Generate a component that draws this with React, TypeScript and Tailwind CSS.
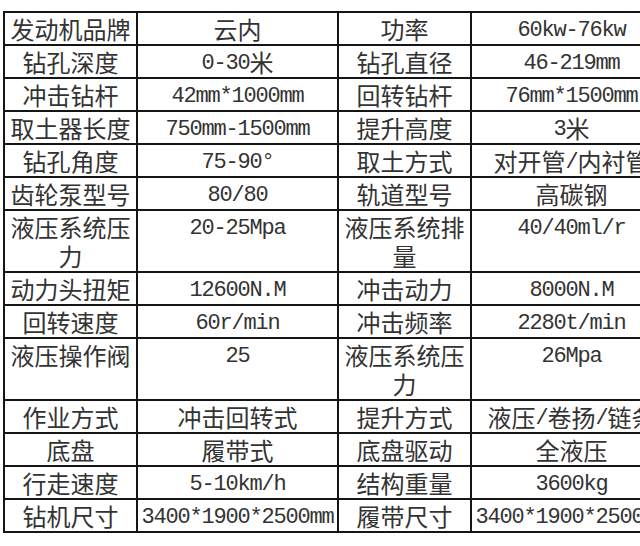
const rows: [string, string, string, string][] = [
  ['发动机品牌', '云内', '功率', '60kw-76kw'],
  ['钻孔深度', '0-30米', '钻孔直径', '46-219mm'],
  ['冲击钻杆', '42mm*1000mm', '回转钻杆', '76mm*1500mm'],
  ['取土器长度', '750mm-1500mm', '提升高度', '3米'],
  ['钻孔角度', '75-90°', '取土方式', '对开管/内衬管'],
  ['齿轮泵型号', '80/80', '轨道型号', '高碳钢'],
  ['液压系统压力', '20-25Mpa', '液压系统排量', '40/40ml/r'],
  ['动力头扭矩', '12600N.M', '冲击动力', '8000N.M'],
  ['回转速度', '60r/min', '冲击频率', '2280t/min'],
  ['液压操作阀', '25', '液压系统压力', '26Mpa'],
  ['作业方式', '冲击回转式', '提升方式', '液压/卷扬/链条'],
  ['底盘', '履带式', '底盘驱动', '全液压'],
  ['行走速度', '5-10km/h', '结构重量', '3600kg'],
  ['钻机尺寸', '3400*1900*2500mm', '履带尺寸', '3400*1900*2500mm'],
];

// CJK runs in the CJK face, latin runs in a half-width mono so widths line up like the original.
// each run is a fixed-height inline-block so mixed fonts don't stretch the row
function Txt({ s }: { s: string }) {
  const parts = s.match(/[\u3000-\u9fff\uff00-\uffef]+|[^\u3000-\u9fff\uff00-\uffef]+/g) || [];
  return (
    <>
      {parts.map((p, i) =>
        /[\u3000-\u9fff\uff00-\uffef]/.test(p) ? (
          <span key={i} className="inline-block align-top h-[29px] font-['Noto_Sans_CJK_SC',sans-serif] text-[24px] leading-[29px]">
            {p}
          </span>
        ) : (
          <span key={i} className="inline-block align-top h-[29px] pt-[2px] font-['Liberation_Mono','Noto_Sans_CJK_SC',monospace] text-[22px] leading-[29px] tracking-[-1.2px]">
            {p}
          </span>
        )
      )}
    </>
  );
}

// labels wrap char by char like the original cells
function Label({ s }: { s: string }) {
  return (
    <div className="flex flex-wrap justify-center">
      {Array.from(s).map((ch, i) => (
        <span key={i} className="block h-[29px] w-[24px] font-['Noto_Sans_CJK_SC',sans-serif] text-[24px] leading-[29px]">
          {ch}
        </span>
      ))}
    </div>
  );
}

export default function App() {
  return (
    <div className="w-[640px] h-[546px] overflow-hidden bg-white">
      <table className="ml-[3px] mt-[11px] w-[668px] table-fixed border-collapse text-[#333]">
        <colgroup>
          <col className="w-[133px]" />
          <col className="w-[201px]" />
          <col className="w-[133px]" />
          <col className="w-[201px]" />
        </colgroup>
        <tbody>
          {rows.map((r, i) => (
            <tr key={i}>
              {r.map((c, j) => (
                <td key={j} className="border-2 border-[#151515] p-0 py-px align-top text-center text-[0px] leading-[29px]">
                  {j % 2 === 0 ? (
                    <Label s={c} />
                  ) : (
                    <div className="flex justify-center whitespace-nowrap h-[29px]">
                      <div>
                        <Txt s={c} />
                      </div>
                    </div>
                  )}
                </td>
              ))}
            </tr>
          ))}
        </tbody>
      </table>
    </div>
  );
}
